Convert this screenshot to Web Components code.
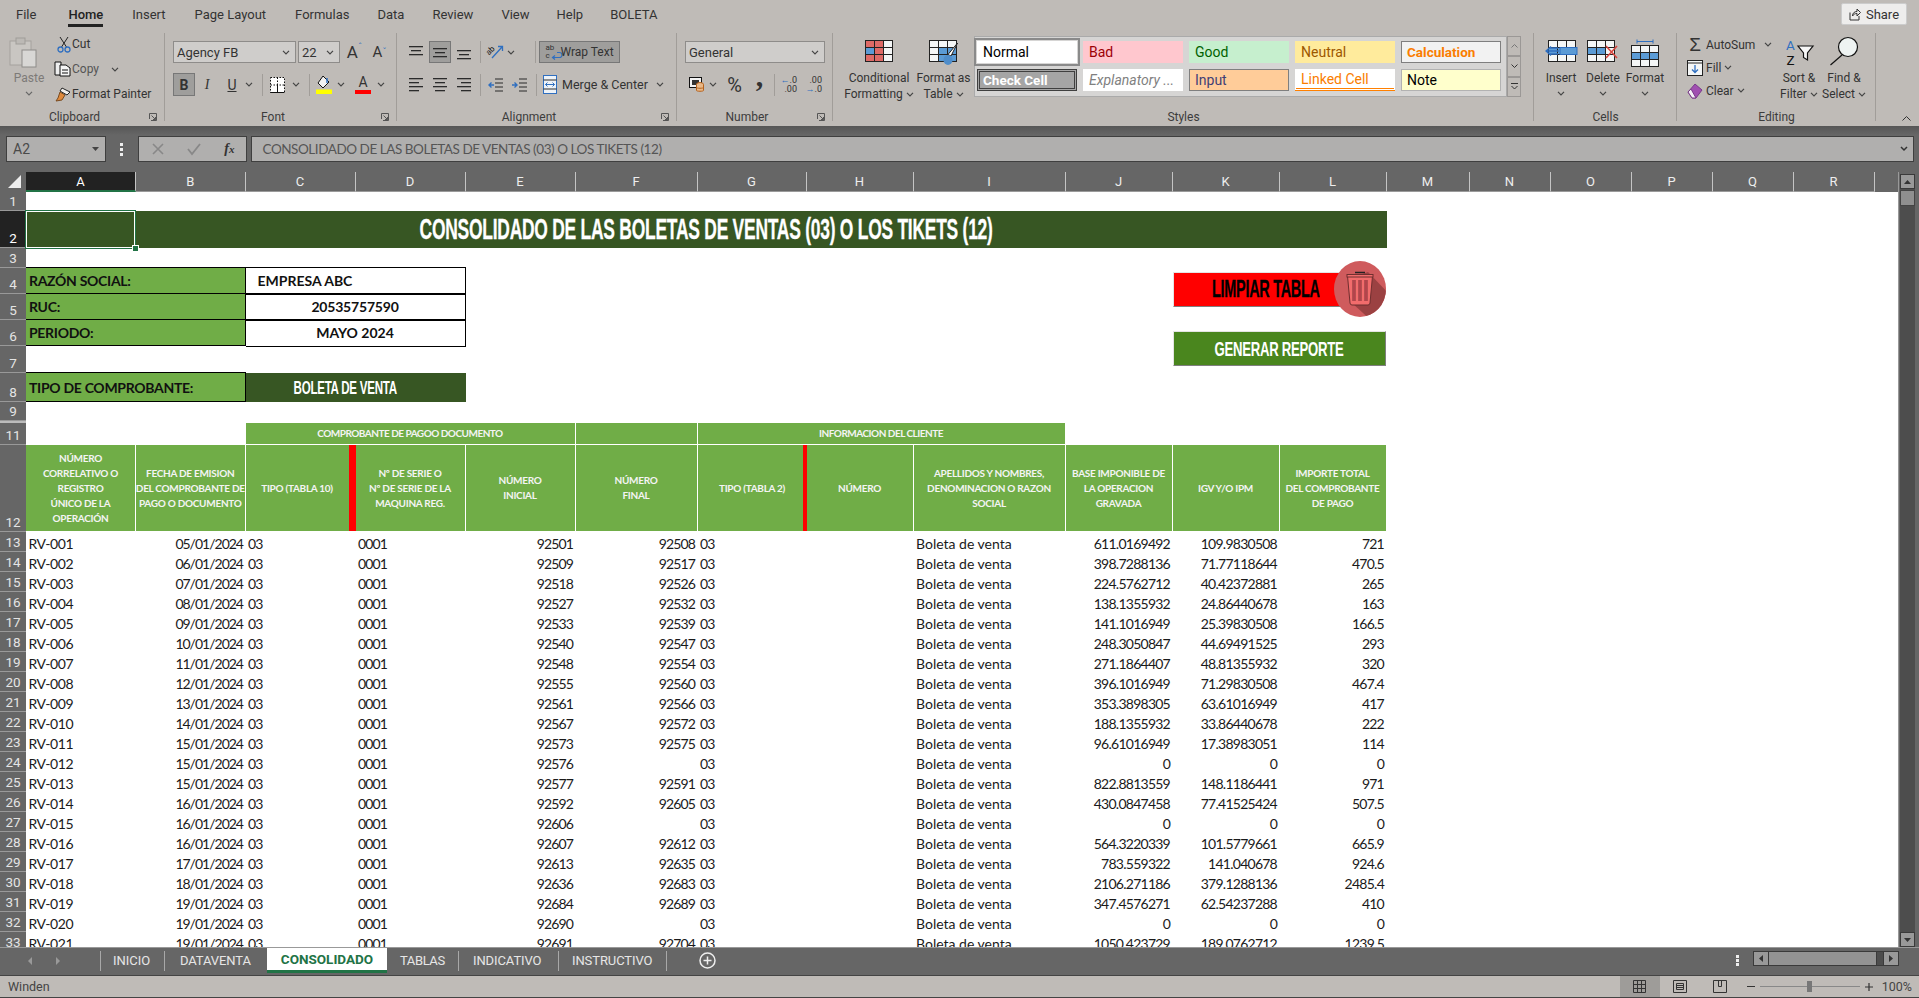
<!DOCTYPE html>
<html lang="en"><head><meta charset="utf-8"><title>Excel</title>
<style>html,body{margin:0;padding:0;height:998px;overflow:hidden;background:#666}</style></head>
<body><x-app></x-app>
<script>
const def=(name,html,extra)=>{customElements.define(name,class extends HTMLElement{
  constructor(){super();this.attachShadow({mode:'open'}).innerHTML=typeof html==='function'?html(this):html;}
  connectedCallback(){if(extra)extra(this);}
});};
const S=(w,h,b,st='')=>`<svg width="${w}" height="${h}" viewBox="0 0 ${w} ${h}" style="display:block;flex:none;overflow:visible;${st}">${b}</svg>`;
const chev=(c='#444')=>S(8,5,`<path d="M1 .8 4 3.8 7 .8" fill="none" stroke="${c}" stroke-width="1.2"/>`);
const launcher=S(8,8,`<path d="M.5 6V.5H7.5V7.5H2" fill="none" stroke="#555"/><path d="M2.5 2.5 6.5 6.5M6.5 4v2.5H4" fill="none" stroke="#555"/>`);
const grid=(x,y,cw,chs,f)=>{let o='',yy=y;chs.forEach((h,r)=>{let xx=x;cw.forEach((w,c)=>{o+=`<rect x="${xx+.5}" y="${yy+.5}" width="${w}" height="${h}" fill="${f(c,r)||'#f4f6f6'}" stroke="#222"/>`;xx+=w;});yy+=h;});return o;};
const lines=(a)=>S(14,15,a.map((l,i)=>`<rect x="${l[0]}" y="${l[1]}" width="${l[2]}" height="1.3" fill="#2b2b2b"/>`).join(''));
const alT=lines([[0,1,14],[2,5,10],[0,9,14]]),alM=lines([[0,3,14],[2,7,10],[0,11,14]]),alB=lines([[0,5,14],[2,9,10],[0,13,14]]);
const hL=lines([[0,1,14],[0,5,10],[0,9,14],[0,13,10]]),hC=lines([[0,1,14],[2,5,10],[0,9,14],[2,13,10]]),hR=lines([[0,1,14],[4,5,10],[0,9,14],[4,13,10]]);
const ind=(d)=>S(15,14,`<path d="M7 1h8M7 5h8M7 9h8M7 13h8" stroke="#2b2b2b" stroke-width="1.2"/><path d="${d?'M6 7H1M3.5 4.5 1 7l2.5 2.5':'M0 7h5M2.500 4.5 5 7 2.500 9.500'}" fill="none" stroke="#2f6fc0" stroke-width="1.4"/>`);

def('x-ag',`<style>:host{display:inline-block;white-space:nowrap;font-family:"Liberation Sans",sans-serif;font-weight:700;transform-origin:center;line-height:1;flex:none}</style><slot></slot>`,
 (h)=>{const w=+h.getAttribute('w');const r=h.offsetWidth;if(r&&w)h.style.transform=`scaleX(${w/r})`;});

def('x-group',(h)=>`<style>
:host{display:flex;flex-direction:column;position:relative;flex:none;height:93px;box-sizing:border-box;width:var(--w)}
:host::after{content:"";position:absolute;right:0;top:0;height:88px;width:1px;background:#a19d99}
.b{flex:1;min-height:0;display:flex;flex-direction:column}
.l{height:18px;display:flex;align-items:center;font:12px/18px Roboto,sans-serif;color:#3c3c3c}
.t{flex:1;text-align:center}.k{width:16px;flex:none;display:${h.hasAttribute('launch')?'block':'none'}}
</style><div class="b"><slot></slot></div><div class="l"><div class="t">${h.getAttribute('label')}</div><div class="k">${launcher}</div></div>`);

def('x-style',(h)=>`<style>
:host{display:block;box-sizing:border-box;height:22px;font:14px/20px Roboto,sans-serif;padding:0 6px 0 5px;border:1px solid transparent;white-space:nowrap;overflow:hidden;background:var(--bg,#fff);color:var(--fg,#000)}
</style><slot></slot>`);

def('x-big',(h)=>`<style>
:host{display:flex;flex-direction:column;align-items:center;flex:none;font:12px/16px Roboto,sans-serif;color:#333;height:75px}
.i{height:29px;margin-top:7px;margin-bottom:1px;display:flex;align-items:flex-start}
.t{text-align:center;white-space:nowrap;display:flex;flex-direction:column;align-items:center}
</style><div class="i"><slot name="i"></slot></div><div class="t"><slot></slot></div>`);

const ICON={
paste:S(28,30,`<rect x="1" y="4" width="21" height="24" fill="#c9c6c2" stroke="#a5a29e"/><rect x="7" y="1" width="9" height="6" fill="#bcb9b5" stroke="#a09d99"/><rect x="13" y="13" width="14" height="17" fill="#d8d7d5" stroke="#8e8c89"/>`),
cut:S(14,17,`<path d="M3 1 9.500 11M11 1 4.500 11" stroke="#222" fill="none"/><circle cx="3.500" cy="13.500" r="2.500" fill="none" stroke="#2f6fc0" stroke-width="1.300"/><circle cx="10.500" cy="13.500" r="2.500" fill="none" stroke="#2f6fc0" stroke-width="1.300"/>`),
copy:S(17,16,`<path d="M1 1h6v13H1z" fill="#eee" stroke="#111"/><path d="M6 4h6l4 3v8H6z" fill="#f6f6f6" stroke="#111"/><path d="M8 9h6M8 12h6" stroke="#111"/>`),
painter:S(17,15,`<path d="M8 1l8 4-3 3-7-4z" fill="#f3f1ee" stroke="#222"/><path d="M6 5l5 3-3 5-6 1 2-3z" fill="#e08a3c" stroke="#7a4b20"/>`),
borders:S(15,16,`<rect x=".5" y=".5" width="14" height="15" fill="#fff"/><path d="M.5.5h14v15H.5zM7.500.5v15M.5 8h14" fill="none" stroke="#111" stroke-dasharray="1.500 1.500"/><path d="M.5 15.500h14M7.500 8v7" stroke="#111"/>`),
fill:S(16,19,`<path d="M7 1 13 7 7 13 2 8z" fill="#f2f2f2" stroke="#111"/><path d="M11 3v5" stroke="#2f6fc0" stroke-width="1.500"/><rect y="14.500" width="16" height="4.500" fill="#ff0"/>`),
orient:S(17,16,`<text x="0" y="9" font-family="Roboto,sans-serif" font-size="8" fill="#111" transform="rotate(-45 4 8)">ab</text><path d="M5 14 15 3M11 2.500h4.500V7" fill="none" stroke="#2f6fc0" stroke-width="1.300"/>`),
wrapa:S(12,8,`<path d="M7 .5h2.500a2.500 2.500 0 0 1 0 5H3M5 3.500 2.500 5.500 5 7.500" fill="none" stroke="#2f6fc0" stroke-width="1.200"/>`),
merge:S(14,19,`<rect x=".5" y=".5" width="13" height="18" fill="#eef3f8" stroke="#2f6fc0"/><path d="M.5 5h13M.5 14h13" stroke="#2b2b2b"/><path d="M2.500 9.500h9M4.500 7.500l-2 2 2 2M9.500 7.500l2 2-2 2" fill="none" stroke="#2f6fc0"/>`),
cur:S(15,15,`<rect x=".5" y=".5" width="12" height="10" fill="#f3f3f3" stroke="#111"/><rect x="3" y="3" width="7" height="5" fill="#333"/><ellipse cx="11" cy="7.500" rx="3.500" ry="2" fill="#e9b887" stroke="#b5611c"/><path d="M7.500 7.500v6c0 1 7 1 7 0v-6" fill="#e9b887" stroke="#b5611c"/><path d="M7.500 10.500c0 1 7 1 7 0" fill="none" stroke="#b5611c"/>`),
cf:S(28,22,grid(0,0,[9,9,9],[7,7,7],(c,r)=>(r===0&&c<2)||(r===2&&c<2)?'#de6a66':(r===1&&c===0)?'#5b9bd5':(r===1&&c===1)?'#de6a66':'#f4f6f6')),
ft:S(30,28,grid(0,0,[9,9,9],[7,7,7],(c,r)=>(r>0&&c>0)?'#5b9bd5':(r===1&&c===2)?'#5b9bd5':'#f4f6f6')+`<path d="M28.500 3 22 16l-3-1.500z" fill="#fff" stroke="#222"/><ellipse cx="19" cy="20" rx="4.500" ry="5" fill="#4f8dca"/>`),
ins:S(33,23,grid(3,0,[9,9,9],[7,7,7],(c,r)=>r===1?'#5b9bd5':'#f4f6f6')+`<rect x="15" y="7.500" width="17" height="7" fill="#5b9bd5" stroke="#2f6fc0"/><path d="M14 11H1M6 6.500 1 11l5 4.500M13 8H5M13 14H5" fill="none" stroke="#2f6fc0" stroke-width="1.300"/>`),
del:S(32,23,grid(0,0,[9,9,9],[7,7,7],(c,r)=>r===1&&c<2?'#5b9bd5':'#f4f6f6')+`<path d="M19 6 30 18M30 6 19 18" stroke="#d8453e" stroke-width="1.600"/>`),
fmt:S(28,29,`<path d="M6 2.500h16M6 .5v4M22 .5v4" stroke="#2f6fc0"/>`+grid(0,6,[9,9,9],[7,7,7],(c,r)=>r===1&&c>0?'#5b9bd5':r===1?'#5b9bd5':'#f4f6f6')),
fillb:S(16,16,`<rect x=".5" y=".5" width="15" height="15" fill="#f4f6f6" stroke="#222"/><path d="M.5 3h15" stroke="#222"/><path d="M8 5v7M5 9.500 8 12.500l3-3" fill="none" stroke="#2f6fc0" stroke-width="1.300"/>`),
clear:S(16,16,`<path d="M1 9 8 1l7 6-6 8H5z" fill="#a04fb0" stroke="#7a3a8a"/><path d="M1 9l4 6h4L4 6z" fill="#f4f0f6" stroke="#7a3a8a"/>`),
funnel:S(17,16,`<path d="M1 1h15l-5.500 7v7l-4-2.500V8z" fill="#f7f7f7" stroke="#111" stroke-width="1.200"/>`),
find:S(30,30,`<circle cx="19" cy="11" r="9.500" fill="#eef3f2" stroke="#111" stroke-width="1.200"/><path d="M13 19 1.500 29" stroke="#111" stroke-width="1.200"/>`),
share:S(12,13,`<path d="M1 4.500V12h9V8" fill="none" stroke="#333"/><path d="M3.500 8c0-3 2-4.500 4.500-4.500V1l3.500 3.500L8 8V5.500c-2 0-3.500 .8-4.500 2.500z" fill="none" stroke="#333"/>`)
};

def('x-ribbon',`<style>
:host{display:block;height:126px;background:#bfbbb7;font:12px Roboto,sans-serif;color:#333;box-sizing:border-box}
.tabs{height:33px;display:flex;align-items:flex-start;font:13px/30px Roboto,sans-serif;padding-left:2px;box-sizing:border-box}
.tab{padding:0 14px;height:26px;line-height:30px;color:#333;position:relative;white-space:nowrap}
.tab.home{font-weight:500;color:#222;margin-left:4px}
.tab.home i{position:absolute;left:14px;right:14px;top:24px;height:2.500px;background:#222}
.share{margin-left:auto;margin-right:12px;margin-top:3px;width:66px;height:22px;box-sizing:border-box;background:#eeedec;border:1px solid #ccc;border-radius:2px;display:flex;align-items:center;justify-content:center;gap:5px;font:13px Roboto,sans-serif}
.groups{display:flex;height:93px}
.col{display:flex;flex-direction:column}
.r{display:flex;align-items:center;flex:none}
.sep{width:1px;height:22px;background:#a19d99;flex:none}
.sel{box-sizing:border-box;height:22px;background:#cfcdcb;border:1px solid #8e8c8a;display:flex;align-items:center;justify-content:space-between;padding:0 5px 0 3px;font:13px Roboto,sans-serif;color:#333;flex:none}
.on{background:#9f9e9c;border:1px solid #777;box-sizing:border-box}
.c{display:flex;align-items:center;justify-content:center;flex:none}
.bi{font:600 14px "Liberation Serif",serif}
.galwrap{display:flex;margin-top:3px;flex:none}
.gal{box-sizing:border-box;width:533px;height:61px;background:#d6d5d4;border:1px solid #aaa;display:grid;grid-template-columns:repeat(5,100px);grid-template-rows:22px 22px;column-gap:6px;row-gap:6px;padding:4px 0 0 2px}
.norm{outline:2px solid #8a8a8a;outline-offset:1px}
.scroll{width:14px;display:flex;flex-direction:column;height:61px}
.scroll div{box-sizing:border-box;flex:1;border:1px solid #9b9896;display:flex;align-items:center;justify-content:center;background:#bfbbb7}
.collapse{flex:1;display:flex;justify-content:flex-end;align-items:flex-end;padding:0 8px 5px 0}
.lnk{border-bottom:3px double #ff8001;line-height:19px}
.az{width:13px;font:13.500px/15px Roboto,sans-serif;display:flex;flex-direction:column;align-items:center}
</style>
<div class="tabs">
<div class="tab">File</div><div class="tab home">Home<i></i></div><div class="tab" style="margin-left:1px">Insert</div><div class="tab" style="margin-left:1px">Page Layout</div><div class="tab" style="margin-left:1px">Formulas</div><div class="tab">Data</div><div class="tab">Review</div><div class="tab">View</div><div class="tab" style="margin-left:-1px">Help</div><div class="tab" style="margin-left:-1px">BOLETA</div>
<div class="share">${ICON.share}<span>Share</span></div>
</div>
<div class="groups">

<x-group label="Clipboard" launch style="--w:165px"><div class="r" style="align-items:flex-start">
 <div class="col" style="width:53px;align-items:center;padding-top:4px;color:#7d7a77">
  <div style="margin-left:9px;width:44px">${ICON.paste}</div>
  <div style="margin-top:3px;margin-left:5px;line-height:16px">Paste</div>
  <div style="margin-top:5px;margin-left:5px">${chev('#666')}</div>
 </div>
 <div class="col" style="gap:3px">
  <div class="r" style="height:22px"><div class="c" style="width:19px;padding-left:2px;box-sizing:border-box">${ICON.cut}</div><span>Cut</span></div>
  <div class="r" style="height:22px;color:#555"><div class="c" style="width:19px">${ICON.copy}</div><span>Copy</span><span style="margin-left:12px">${chev()}</span></div>
  <div class="r" style="height:22px"><div class="c" style="width:19px">${ICON.painter}</div><span>Format Painter</span></div>
 </div>
</div></x-group>

<x-group label="Font" launch style="--w:232px">
 <div class="r" style="margin-top:8px;height:22px">
  <div class="sel" style="margin-left:8px;width:123px"><span>Agency FB</span>${chev()}</div>
  <div class="sel" style="margin-left:2px;width:42px"><span>22</span>${chev()}</div>
  <div class="c" style="margin-left:7px;width:15px;font-size:17px;align-items:flex-start">A<span style="font-size:9px;color:#2f6fc0">ˆ</span></div>
  <div class="c" style="margin-left:11px;width:13px;font-size:15px">A<span style="font-size:9px;color:#2f6fc0">ˇ</span></div>
 </div>
 <div class="r" style="margin-top:10px;height:23px">
  <div class="c on" style="margin-left:8px;width:22px;height:23px;font:700 14px Roboto,sans-serif">B</div>
  <div class="c bi" style="margin-left:1px;width:22px;font-style:italic;font-weight:400">I</div>
  <div class="c" style="margin-left:4px;width:20px;font:14px Roboto,sans-serif;text-decoration:underline">U</div>
  <div class="c" style="margin-left:3px;width:8px">${chev()}</div>
  <div class="sep" style="margin-left:9px"></div>
  <div class="c" style="margin-left:7px;width:15px">${ICON.borders}</div>
  <div class="c" style="margin-left:7px;width:8px">${chev()}</div>
  <div class="sep" style="margin-left:9px"></div>
  <div class="c" style="margin-left:6px;width:16px">${ICON.fill}</div>
  <div class="c" style="margin-left:5px;width:8px">${chev()}</div>
  <div class="col" style="margin-left:10px;width:16px;align-items:center;font:14px/15px Roboto,sans-serif">A<div style="width:16px;height:4px;background:#f00"></div></div>
  <div class="c" style="margin-left:6px;width:8px">${chev()}</div>
 </div>
</x-group>

<x-group label="Alignment" launch style="--w:280px">
 <div class="r" style="margin-top:8px;height:22px">
  <div class="c" style="margin-left:12px;width:14px">${alT}</div>
  <div class="c on" style="margin-left:6px;width:22px;height:22px">${alM}</div>
  <div class="c" style="margin-left:6px;width:14px">${alB}</div>
  <div class="sep" style="margin-left:9px"></div>
  <div class="c" style="margin-left:6px;width:16px">${ICON.orient}</div>
  <div class="c" style="margin-left:4px;width:8px">${chev()}</div>
  <div class="sep" style="margin-left:20px"></div>
  <div class="c on" style="margin-left:3px;width:81px;height:22px;font:12px Roboto,sans-serif;gap:2px;color:#333"><span style="display:flex;flex-direction:column;font-size:8px;line-height:8px;width:13px">ab<span style="display:flex">c${ICON.wrapa}</span></span><span>Wrap Text</span></div>
 </div>
 <div class="r" style="margin-top:10px;height:23px">
  <div class="c" style="margin-left:12px;width:14px">${hL}</div>
  <div class="c" style="margin-left:10px;width:14px">${hC}</div>
  <div class="c" style="margin-left:10px;width:14px">${hR}</div>
  <div class="sep" style="margin-left:9px"></div>
  <div class="c" style="margin-left:7px;width:15px">${ind(1)}</div>
  <div class="c" style="margin-left:9px;width:15px">${ind(0)}</div>
  <div class="sep" style="margin-left:9px"></div>
  <div class="c" style="margin-left:6px;width:14px">${ICON.merge}</div>
  <span style="margin-left:5px;width:85px;white-space:nowrap;font-size:12.500px">Merge &amp; Center</span>
  <div class="c" style="margin-left:9px;width:8px">${chev()}</div>
 </div>
</x-group>

<x-group label="Number" launch style="--w:156px">
 <div class="r" style="margin-top:8px;height:22px"><div class="sel" style="margin-left:8px;width:140px"><span>General</span>${chev()}</div></div>
 <div class="r" style="margin-top:10px;height:23px">
  <div class="c" style="margin-left:12px;width:15px">${ICON.cur}</div>
  <div class="c" style="margin-left:5px;width:8px">${chev()}</div>
  <div class="c" style="margin-left:10px;width:15px;font:20px Roboto,sans-serif">%</div>
  <div class="c" style="margin-left:13px;width:9px;height:23px"><span style="font:700 30px/23px 'Liberation Serif',serif;transform:translateY(-9px)">,</span></div>
  <div class="sep" style="margin-left:10px"></div>
  <div class="col" style="margin-left:7px;width:15px;font:9px/9px Roboto,sans-serif;align-items:flex-end"><span><b style="color:#2f6fc0;font-weight:400">←</b>.0</span><span>.00</span></div>
  <div class="col" style="margin-left:9px;width:16px;font:9px/9px Roboto,sans-serif;align-items:flex-end"><span>.00</span><span><b style="color:#2f6fc0;font-weight:400">→</b>.0</span></div>
 </div>
</x-group>

<x-group label="Styles" style="--w:701px"><div class="r" style="align-items:flex-start">
 <x-big style="margin-left:14px;width:64px"><span slot="i">${ICON.cf}</span><span>Conditional</span><span style="display:flex;align-items:center;gap:3px">Formatting ${chev()}</span></x-big>
 <x-big style="margin-left:2px;width:61px"><span slot="i">${ICON.ft}</span><span>Format as</span><span style="display:flex;align-items:center;gap:3px">Table ${chev()}</span></x-big>
 <div class="galwrap">
  <div class="gal">
   <x-style class="norm">Normal</x-style>
   <x-style style="--bg:#ffc7ce;--fg:#9c0006">Bad</x-style>
   <x-style style="--bg:#c6efce;--fg:#006100">Good</x-style>
   <x-style style="--bg:#ffeb9c;--fg:#9c5700">Neutral</x-style>
   <x-style style="--bg:#f2f2f2;--fg:#fa7d00;border-color:#7f7f7f;font-weight:700;font-size:13.500px">Calculation</x-style>
   <x-style style="--bg:#a5a5a5;--fg:#fff;border:3px double #3f3f3f;line-height:16px;font-weight:700;font-size:13.500px;padding-left:3px">Check Cell</x-style>
   <x-style style="--fg:#7f7f7f;font-style:italic">Explanatory ...</x-style>
   <x-style style="--bg:#fc9;--fg:#3f3f76;border-color:#7f7f7f">Input</x-style>
   <x-style class="lnk" style="--fg:#fa7d00">Linked Cell</x-style>
   <x-style style="--bg:#ffc;border-color:#b2b2b2">Note</x-style>
  </div>
  <div class="scroll">
   <div>${S(7,4,'<path d="M.5 3.500 3.500.5l3 3" fill="none" stroke="#777"/>')}</div>
   <div>${S(7,4,'<path d="M.5.5l3 3 3-3" fill="none" stroke="#333"/>')}</div>
   <div>${S(7,7,'<path d="M0 .5h7M.5 3l3 3 3-3" fill="none" stroke="#333"/>')}</div>
  </div>
 </div>
</div></x-group>

<x-group label="Cells" style="--w:143px"><div class="r" style="align-items:flex-start">
 <x-big style="margin-left:6px;width:42px"><span slot="i">${ICON.ins}</span><span>Insert</span><span style="margin-top:5px;line-height:5px">${chev()}</span></x-big>
 <x-big style="width:42px"><span slot="i">${ICON.del}</span><span>Delete</span><span style="margin-top:5px;line-height:5px">${chev()}</span></x-big>
 <x-big style="width:42px;margin-top:-1px"><span slot="i">${ICON.fmt}</span><span style="margin-top:1px">Format</span><span style="margin-top:5px;line-height:5px">${chev()}</span></x-big>
</div></x-group>

<x-group label="Editing" style="--w:199px"><div class="r" style="align-items:flex-start">
 <div class="col" style="width:102px">
  <div class="r" style="height:23px;margin-left:10px"><div class="c" style="width:16px;font:19px 'Liberation Sans',sans-serif">Σ</div><span style="margin-left:3px">AutoSum</span><span style="margin-left:9px">${chev()}</span></div>
  <div class="r" style="height:23px;margin-left:10px"><div class="c" style="width:16px">${ICON.fillb}</div><span style="margin-left:3px">Fill</span><span style="margin-left:3px">${chev()}</span></div>
  <div class="r" style="height:23px;margin-left:10px"><div class="c" style="width:16px">${ICON.clear}</div><span style="margin-left:3px">Clear</span><span style="margin-left:3px">${chev()}</span></div>
 </div>
 <x-big style="width:40px"><span slot="i" style="display:flex;margin-top:-2px;align-items:center;height:30px"><span class="az"><span style="color:#2f6fc0">A</span><span style="color:#111">Z</span></span>${ICON.funnel}</span><span>Sort &amp;</span><span style="display:flex;align-items:center;gap:3px">Filter ${chev()}</span></x-big>
 <x-big style="width:42px;margin-left:4px"><span slot="i" style="margin-top:-4px;display:block">${ICON.find}</span><span>Find &amp;</span><span style="display:flex;align-items:center;gap:3px">Select ${chev()}</span></x-big>
</div></x-group>

<div class="collapse">${S(9,5,'<path d="M.5 4.500 4.500.5l4 4" fill="none" stroke="#333"/>')}</div>
</div>`);

def('x-formula',`<style>
:host{display:flex;height:46px;box-sizing:border-box;padding-top:10px;background:linear-gradient(#565656,#666 9px);font:13px Roboto,sans-serif;color:#4a4a4a}
.box{box-sizing:border-box;height:26px;background:#b0afae;border:1px solid #3f3f3f;display:flex;align-items:center;flex:none}
</style>
<div class="box" style="margin-left:6px;width:100px;padding:0 6px;justify-content:space-between;font-size:14px"><span>A2</span>${S(7,4,'<path d="M0 0h7L3.500 4z" fill="#444"/>')}</div>
<div style="width:31.500px;display:flex;justify-content:center;align-items:center;height:26px">${S(3,13,'<path d="M0 0h3v3H0zM0 5h3v3H0zM0 10h3v3H0z" fill="#eee"/>')}</div>
<div class="box" style="width:109px;justify-content:space-between;padding:0 11px 0 13px;color:#666">${S(12,12,'<path d="M1 1l10 10M11 1 1 11" stroke="#888" stroke-width="1.600"/>')}${S(14,12,'<path d="M1 6l4 5L13 1" fill="none" stroke="#888" stroke-width="1.800"/>')}<span style="font:italic 700 14px 'Liberation Serif',serif;color:#333">f<span style="font-size:11px">x</span></span></div>
<div class="box" style="margin-left:4px;width:1663px;padding-left:11px;font:13.500px 'Lato',sans-serif;letter-spacing:-.45px;color:#555;justify-content:space-between;padding-right:5px"><span>CONSOLIDADO DE LAS BOLETAS DE VENTAS (03) O LOS TIKETS (12)</span>${S(8,6,'<path d="M1 1l3 3 3-3" fill="none" stroke="#333" stroke-width="1.500"/>')}</div>`);

def('x-btn',(h)=>`<style>
:host{position:absolute;box-sizing:border-box;display:flex;align-items:center;justify-content:center;border:1.500px solid #e4e4e4;border-bottom-color:#7f7f7f}
:host([kind=green]){border-right-color:#7f7f7f}
</style><slot></slot>`);

const COLS=[110,109.5,110,110,110,122,109,107,152,107,107,107,83,81,81,81,81,81,23.5];
const L='ABCDEFGHIJKLMNOPQR';
const ROWS=[[1,19],[2,37],[3,20],[4,26],[5,26],[6,26],[7,27],[8,29],[9,19],[10,2],[11,22],[12,87]];
for(let i=13;i<=33;i++)ROWS.push([i,20]);
const DATA=`05/01/2024 92501 92508 611.0169492 109.9830508 721
06/01/2024 92509 92517 398.7288136 71.77118644 470.5
07/01/2024 92518 92526 224.5762712 40.42372881 265
08/01/2024 92527 92532 138.1355932 24.86440678 163
09/01/2024 92533 92539 141.1016949 25.39830508 166.5
10/01/2024 92540 92547 248.3050847 44.69491525 293
11/01/2024 92548 92554 271.1864407 48.81355932 320
12/01/2024 92555 92560 396.1016949 71.29830508 467.4
13/01/2024 92561 92566 353.3898305 63.61016949 417
14/01/2024 92567 92572 188.1355932 33.86440678 222
15/01/2024 92573 92575 96.61016949 17.38983051 114
15/01/2024 92576 - 0 0 0
15/01/2024 92577 92591 822.8813559 148.1186441 971
16/01/2024 92592 92605 430.0847458 77.41525424 507.5
16/01/2024 92606 - 0 0 0
16/01/2024 92607 92612 564.3220339 101.5779661 665.9
17/01/2024 92613 92635 783.559322 141.040678 924.6
18/01/2024 92636 92683 2106.271186 379.1288136 2485.4
19/01/2024 92684 92689 347.4576271 62.54237288 410
19/01/2024 92690 - 0 0 0
19/01/2024 92691 92704 1050.423729 189.0762712 1239.5`.split('\n').map(s=>s.split(' '));

function sheetHTML(){
 const rowIdx=n=>ROWS.findIndex(r=>r[0]===n)+2;
 const cell=(r,c,cls,txt='',rs=1,cs=1,st='')=>`<div class="${cls}" style="grid-row:${rowIdx(r)}/span ${rs};grid-column:${c+2}/span ${cs};${st}">${txt}</div>`;
 let o='<div class="corner">'+S(14,14,'<path d="M13 0v13H0z" fill="#eee"/>')+'</div>';
 for(let i=0;i<18;i++)o+=`<div class="ch${i===0?' act':''}" style="grid-row:1;grid-column:${i+2}">${L[i]}</div>`;
 o+=`<div class="ch" style="grid-row:1;grid-column:20;border:0"></div>`;
 ROWS.forEach(([n])=>{o+=`<div class="rh${n===2?' act':''}${n===10?' hid':''}" style="grid-row:${rowIdx(n)};grid-column:1">${n===10?'':n}</div>`;});
 o+=cell(2,0,'title','<x-ag w="573" style="font-size:29px;-webkit-text-stroke:.3px #fff">CONSOLIDADO DE LAS BOLETAS DE VENTAS (03) O LOS TIKETS (12)</x-ag>',1,12);
 o+=cell(2,0,'selbox','<i></i>');
 [[4,'RAZÓN SOCIAL:','EMPRESA ABC','padding-left:12px;justify-content:flex-start;letter-spacing:0'],[5,'RUC:','20535757590',''],[6,'PERIODO:','MAYO 2024','letter-spacing:0']].forEach(([r,a,b,st])=>{
  o+=cell(r,0,'lab',a,1,2,r===6?'border-bottom:1px solid #000':'');o+=cell(r,2,'val',b,1,2,st);});
 o+=cell(8,0,'lab','TIPO DE COMPROBANTE:',1,2,'border-top:1px solid #000;border-bottom:1px solid #000;padding-top:2px');
 o+=cell(8,2,'dk','<x-ag w="103" style="font-size:18px;margin-right:20px">BOLETA DE VENTA</x-ag>',1,2);
 o+=cell(11,2,'hd tight','COMPROBANTE DE PAGOO DOCUMENTO',1,3)+cell(11,5,'hd','')+cell(11,6,'hd tight','INFORMACION DEL CLIENTE',1,3);
 const H=['NÚMERO<br>CORRELATIVO O<br>REGISTRO<br>ÚNICO DE LA<br>OPERACIÓN','FECHA DE EMISION<br>DEL COMPROBANTE DE<br>PAGO O DOCUMENTO','TIPO (TABLA 10)','Nº DE SERIE O<br>Nº DE SERIE DE LA<br>MAQUINA REG.','NÚMERO<br>INICIAL','NÚMERO<br>FINAL','TIPO (TABLA 2)','NÚMERO','APELLIDOS Y NOMBRES,<br>DENOMINACION O RAZON<br>SOCIAL','BASE IMPONIBLE DE<br>LA OPERACION<br>GRAVADA','IGV Y/O IPM','IMPORTE TOTAL<br>DEL COMPROBANTE<br>DE PAGO'];
 H.forEach((t,i)=>{o+=cell(12,i,'hd'+(i===2?' red':i===6?' red2':''),t);});
 DATA.forEach((d,i)=>{const r=13+i,id='RV-'+String(i+1).padStart(3,'0');
  o+=cell(r,0,'d',id)+cell(r,1,'d n dt',d[0])+cell(r,2,'d m','03')+cell(r,3,'d m','0001')+cell(r,4,'d n m',d[1])+cell(r,5,'d n m',d[2]==='-'?'':d[2])+cell(r,6,'d m','03')+cell(r,8,'d tx','Boleta de venta')+cell(r,9,'d n v',d[3])+cell(r,10,'d n v',d[4])+cell(r,11,'d n v',d[5]);});
 return `<style>
:host{display:block;flex:none;width:1899px;height:775px;overflow:hidden;background:#fff;position:relative;border-right:1px solid #999;box-sizing:border-box}
.g{display:grid;grid-template-columns:26px ${COLS.map(c=>c+'px').join(' ')};grid-template-rows:20px ${ROWS.map(r=>r[1]+'px').join(' ')};font:14px/20px Lato,sans-serif;letter-spacing:-.42px;color:#1a1a1a;position:relative}
.corner{grid-row:1;grid-column:1;background:#666;display:flex;justify-content:flex-end;align-items:flex-end;padding:0 4px 3px 0}
.ch{background:#666;color:#eee;font:13px/19px Roboto,sans-serif;letter-spacing:0;text-align:center;border-right:1px solid #c4c4c4;border-bottom:1px solid #9a9a9a;box-sizing:border-box}
.ch.act{background:#222;border-bottom:2px solid #217346;color:#fff}
.rh{background:#666;color:#e4e4e4;font:13.500px/18px Roboto,sans-serif;letter-spacing:0;text-align:center;border-bottom:1px solid #999;box-sizing:border-box;display:flex;align-items:flex-end;justify-content:center;overflow:hidden}
.rh.act{background:#222;color:#fff}
.rh.hid{background:#bbb;border:0}
.title{background:#375623;color:#fff;display:flex;align-items:center;justify-content:center;overflow:hidden;min-width:0}
.selbox{position:relative;margin:-1px 0 -1px -1px;box-shadow:inset 0 0 0 1px #217346,inset 0 0 0 2px #fff;z-index:2}
.selbox i{position:absolute;right:-3px;bottom:-3px;width:5px;height:5px;background:#217346;border:1px solid #fff}
.lab{background:#70ad47;font:700 14px/26px Lato,sans-serif;color:#111;padding-left:3px;border-right:1px solid #000;box-sizing:border-box;letter-spacing:-.3px;display:flex;align-items:center;border-top:1px solid #000;margin-top:-1px}
.val{display:flex;align-items:center;justify-content:center;font:700 14px/26px Lato,sans-serif;color:#111;border:1px solid #000;border-left:0;box-sizing:border-box;letter-spacing:-.2px;margin-top:-1px;margin-bottom:-1px}
.dk{background:#375623;color:#fff;display:flex;align-items:center;justify-content:center;overflow:hidden}
.hd{background:#70ad47;color:#f4f4f4;font:700 10px/15px Lato,sans-serif;letter-spacing:-.28px;white-space:nowrap;text-align:center;display:flex;align-items:center;justify-content:center;border-right:1px solid #fff;border-bottom:1px solid #fff;box-sizing:border-box}
.tight{letter-spacing:-.5px}
.hd.red{border-right:0;padding-right:7px;background:linear-gradient(90deg,#70ad47 calc(100% - 7px),#f00 calc(100% - 7px))}
.hd.red2{border-right:0;background:linear-gradient(90deg,#70ad47 calc(100% - 4px),#f00 calc(100% - 4px))}
.d{padding:1.500px 2.500px 0;white-space:nowrap;line-height:19px;box-sizing:border-box}
.n{text-align:right}
.dt{letter-spacing:-1px}.m{letter-spacing:-.85px}.v{letter-spacing:-.75px}.tx{letter-spacing:0}
</style><div class="g">${o}
<x-btn kind="red" style="left:1173px;top:99.500px;width:172px;height:35.500px;background:#f00"><x-ag w="108" style="font-size:23px;color:#000;margin-left:14px;-webkit-text-stroke:.3px #000">LIMPIAR TABLA</x-ag></x-btn>
<div style="position:absolute;left:1334px;top:88.500px;width:52px;height:56px">${S(52,56,`<defs><clipPath id="cp"><ellipse cx="26" cy="28" rx="26" ry="28"/></clipPath></defs><ellipse cx="26" cy="28" rx="26" ry="28" fill="#cf5b5d"/><g clip-path="url(#cp)"><path d="M14 18 34 11 60 38 40 62 18 42z" fill="#9b4142"/></g><path d="M13.500 15h25l-2.500 27q-.2 2-2 2H18q-1.800 0-2-2z" fill="#f26c6c" stroke="#6f2f2f"/><rect x="13" y="13.500" width="26" height="2.500" fill="#f26c6c" stroke="#6f2f2f"/><path d="M21 11.500h10" stroke="#222" stroke-width="1.500"/><path d="M20 19v21M26 19v21M32 19v21" stroke="#7a3333" stroke-width="3"/><path d="M20 19v21M26 19v21M32 19v21" stroke="#e56" stroke-width="1"/>`)}</div>
<x-btn kind="green" style="left:1173px;top:159px;width:213px;height:35px;background:#4a861e"><x-ag w="129" style="font-size:21px;color:#fff">GENERAR REPORTE</x-ag></x-btn>
</div>`;
}
def('x-sheet',sheetHTML);

def('x-vscroll',`<style>
:host{display:flex;flex:1;background:#666;justify-content:center;box-sizing:border-box}
.w{width:15px;margin-left:-3px;margin-top:2px;height:773px;display:flex;flex-direction:column;background:#4d4d4d}
.b{box-sizing:border-box;height:15px;background:#999;border:1px solid #3a3a3a;display:flex;align-items:center;justify-content:center;flex:none}
.t{height:16px;margin:1px 0 0;background:#8f8f8f;border:1px solid #444;box-sizing:border-box;flex:none}
.s{flex:1}
</style><div class="w"><div class="b">${S(7,4,'<path d="M3.500 0 7 4H0z" fill="#333"/>')}</div><div class="t"></div><div class="s"></div><div class="b">${S(7,4,'<path d="M0 0h7L3.500 4z" fill="#333"/>')}</div></div>`);

def('x-sheettabs',`<style>
:host{display:flex;align-items:flex-start;height:28px;background:#666;border-top:1px solid #999;box-sizing:border-box;font:13px/25px Roboto,sans-serif;color:#e6e6e6}
.t{height:25px;white-space:nowrap;flex:none;box-sizing:border-box}
.sp{width:1px;height:20px;background:#a8a8a8;margin-top:3px;flex:none}
.on{background:#fff;color:#217346;font-weight:700;font-size:13.500px;border-bottom:3px solid #217346;width:120px;text-align:center;line-height:23px}
.a{flex:none;display:flex;align-items:center;height:25px}
.p{margin-left:auto}
</style>
<div class="a" style="margin-left:28px">${S(4,8,'<path d="M4 0v8L0 4z" fill="#999"/>')}</div>
<div class="a" style="margin-left:24px">${S(4,8,'<path d="M0 0v8l4-4z" fill="#999"/>')}</div>
<div class="sp" style="margin-left:40px"></div>
<div class="t" style="padding:0 14px 0 12px;width:63px">INICIO</div><div class="sp"></div>
<div class="t" style="padding-left:15px;width:102px;letter-spacing:-.1px">DATAVENTA</div>
<div class="t on">CONSOLIDADO</div>
<div class="t" style="padding-left:13px;width:71px;letter-spacing:-.4px">TABLAS</div><div class="sp"></div>
<div class="t" style="padding-left:14px;width:99px;letter-spacing:-.1px">INDICATIVO</div><div class="sp"></div>
<div class="t" style="padding-left:13px;width:107px;letter-spacing:-.1px">INSTRUCTIVO</div><div class="sp"></div>
<div class="a" style="margin-left:32px">${S(17,17,'<circle cx="8.500" cy="8.500" r="7.500" fill="none" stroke="#eee" stroke-width="1.500"/><path d="M8.500 4.500v8M4.500 8.500h8" stroke="#eee" stroke-width="1.500"/>')}</div>
<div class="a p">${S(3,11,'<path d="M0 0h3v3H0zM0 4h3v3H0zM0 8h3v3H0z" fill="#eee"/>')}</div>
<div class="a" style="margin:3px 20px 0 14px;background:#4d4d4d;border:1px solid #3a3a3a;box-sizing:content-box;height:13px;width:144px">
 <div style="width:14px;height:13px;background:#999;display:flex;align-items:center;justify-content:center;border-right:1px solid #3a3a3a">${S(4,7,'<path d="M4 0v7L0 3.500z" fill="#333"/>')}</div>
 <div style="width:107px;height:13px;background:#939393;border-right:1px solid #3a3a3a"></div>
 <div style="margin-left:auto;width:14px;height:13px;background:#999;display:flex;align-items:center;justify-content:center;border-left:1px solid #3a3a3a">${S(4,7,'<path d="M0 0v7l4-3.500z" fill="#333"/>')}</div>
</div>`);

def('x-status',`<style>
:host{display:flex;align-items:center;height:23px;background:#bfbbb7;border-top:1px solid #444;border-bottom:1px solid #444;box-sizing:border-box;font:12.500px Roboto,sans-serif;color:#444}
.v{width:40px;height:21px;display:flex;align-items:center;justify-content:center;flex:none}
.on{background:#9e9c99}
</style>
<span style="margin-left:8px">Winden</span>
<div class="v on" style="margin-left:auto">${S(13,13,'<path d="M.5.500h12v12H.5zM4.500.500v12M8.500.500v12M.5 4.500h12M.5 8.500h12" fill="none" stroke="#333"/>')}</div>
<div class="v">${S(14,13,'<path d="M.5.500h13v12H.5zM3.500 3.500h7v6h-7zM3.500 5.500h7M3.500 7.500h7" fill="none" stroke="#333"/>')}</div>
<div class="v">${S(14,13,'<path d="M.5.500h13v12H.5zM5.500.500v6h3v-6" fill="none" stroke="#333"/>')}</div>
<div style="width:8px;height:1.500px;background:#333;margin-left:7px;flex:none"></div>
<div style="width:100px;height:1px;background:#888;margin-left:5px;flex:none;display:flex;justify-content:center;align-items:center"><div style="width:5px;height:11px;background:#777;flex:none"></div></div>
<div style="margin-left:5px;flex:none">${S(8,8,'<path d="M4 0v8M0 4h8" stroke="#333" stroke-width="1.200"/>')}</div>
<span style="margin:0 7px 0 9px;flex:none">100%</span>`);

def('x-app',`<style>
:host{display:flex;flex-direction:column;width:1919px;height:998px;overflow:hidden}
.m{display:flex;height:775px;flex:none;background:#666}
</style><x-ribbon></x-ribbon><x-formula></x-formula><div class="m"><x-sheet></x-sheet><x-vscroll></x-vscroll></div><x-sheettabs></x-sheettabs><x-status></x-status>`);
</script></body></html>
